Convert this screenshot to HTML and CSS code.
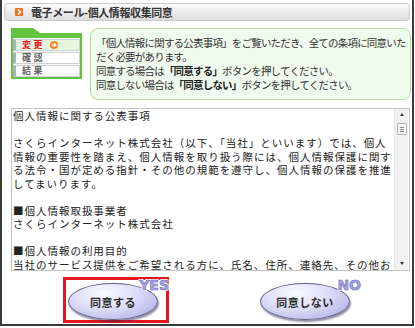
FILE: index.html
```html
<!DOCTYPE html>
<html lang="ja">
<head>
  <meta charset="UTF-8">
  <title>電子メール-個人情報収集同意</title>
  <link rel="stylesheet" href="styles.css">
</head>
<body>
  <div class="frame">
    <!-- タイトル -->
    <div class="titlebar">
      <span class="title-icon">
        <svg width="8" height="8" viewBox="0 0 8 8"><path d="M3 1.5 L5.5 4 L3 6.5" fill="none" stroke="#fff" stroke-width="1.6"/></svg>
      </span>
      <h1 class="title">電子メール-個人情報収集同意</h1>
    </div>

    <div class="top">
      <!-- ステップ -->
      <div class="steps">
        <svg class="steps-tab" width="71" height="10" viewBox="0 0 71 10"><path d="M0 0 H22 L29 5 H71 V10 H0 Z" fill="#63c43f"/></svg>
        <ul class="step-list">
          <li class="step active">変更
            <span class="step-icon"><svg width="8" height="8" viewBox="0 0 8 8"><circle cx="4" cy="4" r="4" fill="#f28a24"/><path d="M2 4 H5.6 M4 2.3 L5.7 4 L4 5.7" fill="none" stroke="#fff" stroke-width="1.3"/></svg></span>
          </li>
          <li class="step">確認</li>
          <li class="step">結果</li>
        </ul>
      </div>

      <!-- 説明 -->
      <div class="notice">
        「個人情報に関する公表事項」をご覧いただき、全ての条項に同意いた<br>
        だく必要があります。<br>
        同意する場合は<b>「同意する」</b>ボタンを押してください。<br>
        同意しない場合は<b>「同意しない」</b>ボタンを押してください。
      </div>
    </div>

    <!-- 公表事項 -->
    <div class="terms">
      <div class="terms-text">個人情報に関する公表事項

さくらインターネット株式会社（以下、「当社」といいます）では、個人
情報の重要性を踏まえ、個人情報を取り扱う際には、個人情報保護に関す
る法令・国が定める指針・その他の規範を遵守し、個人情報の保護を推進
してまいります。

■個人情報取扱事業者
さくらインターネット株式会社

■個人情報の利用目的
当社のサービス提供をご希望される方に、氏名、住所、連絡先、その他お</div>
      <div class="scrollbar">
        <span class="arrow up"></span>
        <span class="thumb"><i></i><i></i><i></i></span>
        <span class="arrow down"></span>
      </div>
    </div>

    <!-- ボタン -->
    <div class="buttons">
      <button class="agree-btn selected">
        <span class="oval">同意する</span>
        <span class="tag">YES</span>
      </button>
      <button class="agree-btn">
        <span class="oval">同意しない</span>
        <span class="tag">NO</span>
      </button>
    </div>
  </div>
</body>
</html>
```

FILE: styles.css
```css
body {
  margin: 0;
  background: #fff;
  font-family: "Noto Sans CJK JP", "Noto Sans", sans-serif;
  color: #333;
}
.frame {
  width: 410px;
  height: 324px;
  border: 2px solid #3a3a3a;
  border-top: 0;
  overflow: hidden;
}
.titlebar {
  margin: 3px 2px 0 2px;
  height: 18px;
  box-sizing: border-box;
  border: 1px solid #cacaca;
  border-radius: 4px;
  background: linear-gradient(#fbfbfb, #e9e9e9 60%, #dcdcdc);
  display: flex;
  align-items: center;
  padding-left: 10px;
}
.title-icon {
  width: 8px;
  height: 8px;
  background: #f0701e;
  border-radius: 1px;
  display: flex;
}
.title {
  margin: 0 0 0 8px;
  font-size: 11px;
  font-weight: bold;
  letter-spacing: -0.4px;
  color: #333;
  line-height: 16px;
}
.top {
  display: flex;
  margin-top: 7px;
  padding-left: 9px;
  gap: 8px;
}
.steps {
  width: 71px;
  flex-shrink: 0;
}
.steps-tab {
  display: block;
}
.step-list {
  list-style: none;
  margin: 0;
  padding: 1px 0 0 0;
  border: 2px solid #63c43f;
  border-top: 0;
  background: #f6f6f6;
}
.step {
  height: 12px;
  box-sizing: border-box;
  margin-bottom: 1px;
  border: 1px solid #cfcfd6;
  border-left: 3px solid #aeb0c6;
  background: #fff;
  padding-left: 6px;
  font-size: 9px;
  font-weight: bold;
  line-height: 10px;
  letter-spacing: 2.5px;
  color: #666;
  display: flex;
  align-items: center;
}
.step:last-child {
  margin-bottom: 0;
}
.step.active {
  background: #e6f6df;
  color: #e8141c;
}
.step-icon {
  display: flex;
  margin-left: 5px;
}
.notice {
  flex: 1;
  margin-right: 1px;
  height: 72px;
  box-sizing: border-box;
  border: 1px solid #b2dfa6;
  border-radius: 8px;
  background: #effbec;
  padding: 7px 0 0 5px;
  font-size: 10.5px;
  letter-spacing: -0.8px;
  line-height: 14px;
  color: #333;
  white-space: nowrap;
}
.notice b {
  color: #222;
}
.terms {
  margin: 8px 2px 0 9px;
  height: 163px;
  box-sizing: border-box;
  border: 1px solid #c4c4c4;
  display: flex;
}
.terms-text {
  flex: 1;
  padding-left: 1px;
  white-space: pre;
  overflow: hidden;
  font-size: 10.5px;
  letter-spacing: 0.98px;
  line-height: 13.5px;
  color: #222;
}
.scrollbar {
  width: 13px;
  margin-right: 1px;
  background: #f1f1f1;
  border-left: 1px solid #e6e6e6;
  display: flex;
  flex-direction: column;
  align-items: center;
}
.arrow {
  width: 0;
  height: 0;
  border-left: 2.5px solid transparent;
  border-right: 2.5px solid transparent;
}
.arrow.up {
  margin-top: 4px;
  border-bottom: 3px solid #333;
}
.arrow.down {
  margin-top: auto;
  margin-bottom: 5px;
  border-top: 3px solid #333;
}
.thumb {
  margin-top: 7px;
  width: 10px;
  height: 12px;
  box-sizing: border-box;
  border: 1px solid #b4b4b4;
  border-radius: 1px;
  background: #f7f7f7;
  display: flex;
  flex-direction: column;
  align-items: center;
  justify-content: center;
  gap: 1px;
}
.thumb i {
  width: 4px;
  height: 1px;
  background: #888;
}
.buttons {
  display: flex;
  margin-top: 6px;
  padding-left: 61px;
  gap: 86px;
}
.agree-btn {
  position: relative;
  width: 106px;
  height: 46px;
  box-sizing: border-box;
  border: 3px solid transparent;
  background: #fff;
  padding: 0;
  font-family: inherit;
  cursor: pointer;
}
.agree-btn.selected {
  border-color: #e8141c;
}
.oval {
  position: absolute;
  left: 2px;
  top: 3px;
  width: 90px;
  height: 37px;
  box-sizing: border-box;
  border: 1px solid #5e5e86;
  border-radius: 50%;
  background: radial-gradient(ellipse at 40% 25%, #fafaff 0%, #dcdcf8 45%, #b4b4e6 85%, #9c9cd8 100%);
  box-shadow: 1px 2px 2px rgba(40, 40, 70, 0.55);
  display: flex;
  align-items: center;
  justify-content: center;
  font-size: 11px;
  font-weight: bold;
  color: #2a2a2a;
  letter-spacing: 0.5px;
}
.tag {
  position: absolute;
  right: -3px;
  top: -2px;
  font-family: "DejaVu Sans", sans-serif;
  font-size: 14px;
  font-weight: bold;
  line-height: 15px;
  color: #a4a4e6;
  -webkit-text-stroke: 0.6px #6e6eb8;
  text-shadow: 1px 1px 0 #fff, -1px -1px 0 #fff, 1px -1px 0 #fff, -1px 1px 0 #fff;
}
```
